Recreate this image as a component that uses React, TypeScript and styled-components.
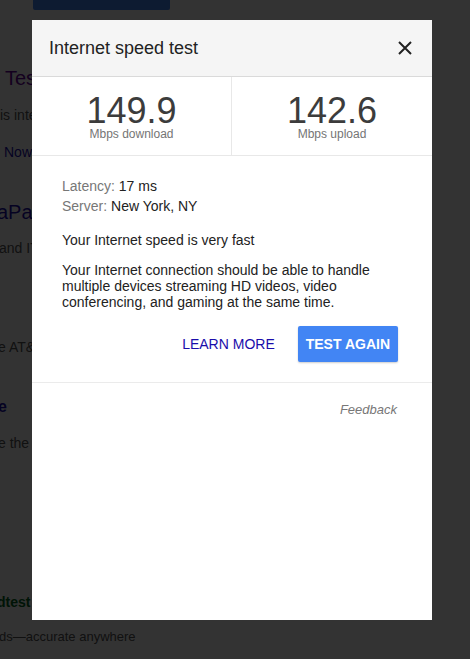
import React from "react";
import styled, { createGlobalStyle } from "styled-components";

const Global = createGlobalStyle`
  html, body { margin: 0; padding: 0; }
  body {
    background: #ffffff;
    font-family: "Liberation Sans", Arial, Helvetica, sans-serif;
    overflow: hidden;
    width: 470px;
    height: 659px;
  }
`;

/* ---------- page behind the dialog ---------- */
const Page = styled.div`
  width: 470px;
  height: 659px;
  overflow: hidden;
  background: #ffffff;
  display: flex;
  flex-direction: column;
`;

const RunButton = styled.div`
  margin-left: 33px;
  width: 137px;
  height: 10px;
  background: #4285f4;
  border-radius: 0 0 2px 2px;
  flex: none;
`;

const ResultLine = styled.div<{ $top: number; $size?: number; $lh?: number; $color?: string; $bold?: boolean; $shift?: number }>`
  margin-top: ${(p) => p.$top}px;
  margin-left: ${(p) => p.$shift ?? 0}px;
  font-size: ${(p) => p.$size ?? 13}px;
  line-height: ${(p) => p.$lh ?? 20}px;
  height: ${(p) => p.$lh ?? 20}px;
  color: ${(p) => p.$color ?? "#545454"};
  font-weight: ${(p) => (p.$bold ? 700 : 400)};
  white-space: nowrap;
  flex: none;
`;

/* ---------- dialog ---------- */
const Backdrop = styled.div`
  position: fixed;
  inset: 0;
  background: rgba(0, 0, 0, 0.8);
  display: flex;
  align-items: flex-start;
  padding: 20px 0 0 32px;
`;

const Dialog = styled.div`
  width: 400px;
  height: 600px;
  background: #ffffff;
  display: flex;
  flex-direction: column;
`;

const Header = styled.div`
  height: 56px;
  flex: none;
  background: #f5f5f5;
  border-bottom: 1px solid #dadada;
  display: flex;
  align-items: center;
  justify-content: space-between;
  padding: 0 20px 0 17px;
`;

const Title = styled.h2`
  margin: 0;
  font-size: 18px;
  font-weight: 400;
  color: #222222;
  line-height: 24px;
`;

const CloseButton = styled.button`
  width: 14px;
  height: 14px;
  padding: 0;
  border: 0;
  background: none;
  display: flex;
  cursor: pointer;
`;

const Stats = styled.div`
  height: 78px;
  flex: none;
  display: grid;
  grid-template-columns: 1fr 1fr;
  border-bottom: 1px solid #e8e8e8;
`;

const StatCell = styled.div<{ $divider?: boolean }>`
  display: flex;
  flex-direction: column;
  align-items: center;
  padding-top: 18px;
  border-right: ${(p) => (p.$divider ? "1px solid #e8e8e8" : "0")};
`;

const StatValue = styled.div`
  font-size: 36px;
  line-height: 32px;
  color: #3c3c3c;
`;

const StatLabel = styled.div`
  font-size: 12px;
  line-height: 14px;
  color: #757575;
`;

const Body = styled.div`
  padding: 20px 34px 20px 30px;
  border-bottom: 1px solid #ebebeb;
  flex: none;
  display: flex;
  flex-direction: column;
`;

const InfoLine = styled.div`
  font-size: 14px;
  line-height: 20px;
  color: #222222;
`;

const InfoLabel = styled.span`
  color: #777777;
`;

const Headline = styled.p`
  margin: 14px 0 0;
  font-size: 14px;
  line-height: 20px;
  color: #222222;
`;

const Paragraph = styled.p`
  margin: 12px 0 0;
  font-size: 14px;
  line-height: 16px;
  color: #222222;
`;

const Actions = styled.div`
  margin-top: 16px;
  display: flex;
  justify-content: flex-end;
  align-items: center;
  gap: 15px;
`;

const TextButton = styled.button`
  height: 36px;
  padding: 0 8px;
  border: 0;
  background: none;
  font-family: inherit;
  font-size: 14px;
  color: #1a0dab;
  cursor: pointer;
`;

const PrimaryButton = styled.button`
  height: 36px;
  padding: 0 8px;
  border: 0;
  border-radius: 2px;
  background: #4285f4;
  box-shadow: 0 1px 2px rgba(0, 0, 0, 0.2);
  font-family: inherit;
  font-size: 14px;
  font-weight: 700;
  color: #ffffff;
  cursor: pointer;
`;

const Footer = styled.div`
  padding: 19px 35px 0 30px;
  display: flex;
  justify-content: flex-end;
`;

const FeedbackLink = styled.a`
  font-size: 13px;
  line-height: 16px;
  font-style: italic;
  color: #777777;
  text-decoration: none;
`;

export default function App() {
  return (
    <>
      <Global />
      <Page>
        <RunButton />
        <ResultLine $top={56} $size={20} $lh={24} $color="#660099" $shift={5}>
          Test
        </ResultLine>
        <ResultLine $top={15} $size={14}>is inter</ResultLine>
        <ResultLine $top={17} $size={14} $color="#1a0dab" $shift={4}>
          Now
        </ResultLine>
        <ResultLine $top={38} $size={20} $lh={24} $color="#1a0dab" $shift={-3}>
          aPath
        </ResultLine>
        <ResultLine $top={14} $size={14} $shift={-1}>
          and IT
        </ResultLine>
        <ResultLine $top={79} $size={14} $shift={-2}>
          e AT&amp;T
        </ResultLine>
        <ResultLine $top={38} $size={16} $lh={24} $color="#1a0dab" $bold $shift={-2}>
          e
        </ResultLine>
        <ResultLine $top={14} $size={14} $shift={-2}>
          e the V
        </ResultLine>
        <ResultLine $top={139} $size={14} $color="#006621" $bold $shift={-3}>
          dtest
        </ResultLine>
        <ResultLine $top={15} $shift={-1}>
          ds—accurate anywhere
        </ResultLine>
      </Page>

      <Backdrop>
        <Dialog role="dialog" aria-label="Internet speed test">
          <Header>
            <Title>Internet speed test</Title>
            <CloseButton aria-label="Close">
              <svg width="14" height="14" viewBox="0 0 14 14">
                <path d="M1 1 L13 13 M13 1 L1 13" stroke="#222" strokeWidth="2" fill="none" />
              </svg>
            </CloseButton>
          </Header>
          <Stats>
            <StatCell $divider>
              <StatValue>149.9</StatValue>
              <StatLabel>Mbps download</StatLabel>
            </StatCell>
            <StatCell>
              <StatValue>142.6</StatValue>
              <StatLabel>Mbps upload</StatLabel>
            </StatCell>
          </Stats>
          <Body>
            <InfoLine>
              <InfoLabel>Latency:</InfoLabel> 17 ms
            </InfoLine>
            <InfoLine>
              <InfoLabel>Server:</InfoLabel> New York, NY
            </InfoLine>
            <Headline>Your Internet speed is very fast</Headline>
            <Paragraph>
              Your Internet connection should be able to handle multiple devices streaming HD videos, video
              conferencing, and gaming at the same time.
            </Paragraph>
            <Actions>
              <TextButton>LEARN MORE</TextButton>
              <PrimaryButton>TEST AGAIN</PrimaryButton>
            </Actions>
          </Body>
          <Footer>
            <FeedbackLink href="#">Feedback</FeedbackLink>
          </Footer>
        </Dialog>
      </Backdrop>
    </>
  );
}
